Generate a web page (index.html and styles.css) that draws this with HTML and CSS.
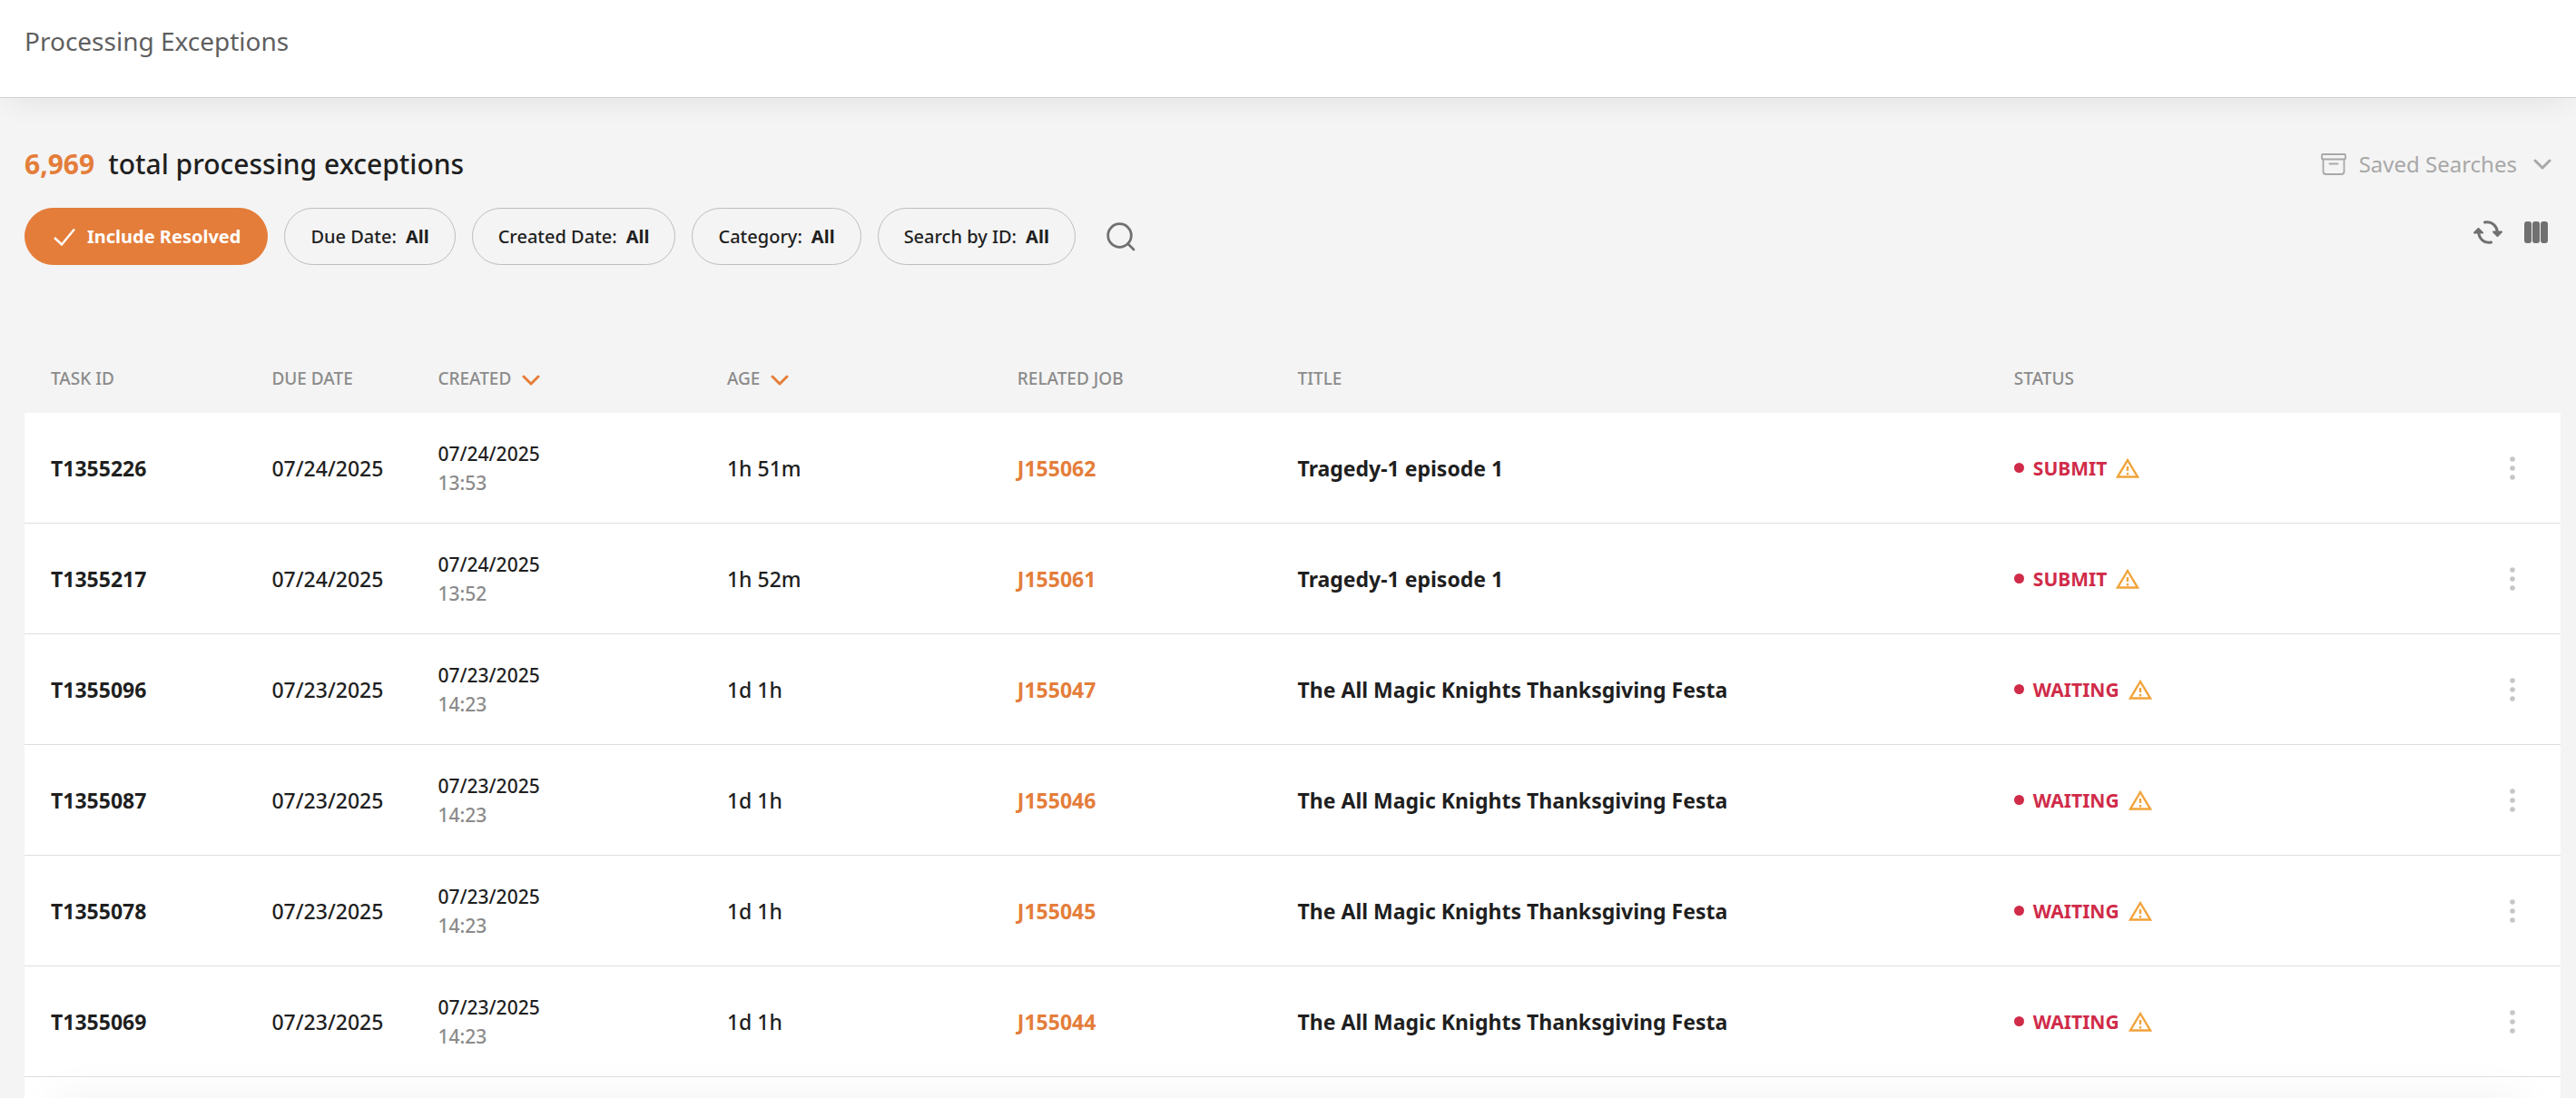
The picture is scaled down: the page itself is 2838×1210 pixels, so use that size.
FILE: index.html
```html
<!DOCTYPE html>
<html lang="en">
<head>
<meta charset="utf-8">
<meta name="viewport" content="width=device-width, initial-scale=1">
<title>Processing Exceptions</title>
<link rel="stylesheet" href="styles.css">
</head>
<body>
<svg class="sprite" aria-hidden="true">
  <symbol id="chevron" viewBox="0 0 20 12"><path d="M2 2l8 8 8-8" fill="none" stroke="currentColor" stroke-width="3" stroke-linecap="round" stroke-linejoin="round"/></symbol>
  <symbol id="warning" viewBox="0 0 26 24"><path d="M13 3L24 21.500H2z" fill="none" stroke="currentColor" stroke-width="2.400"/><path d="M13 10v5M13 17v2.500" stroke="currentColor" stroke-width="2.400"/></symbol>
  <symbol id="dots" viewBox="0 0 6 26"><circle cx="3" cy="3" r="2.800"/><circle cx="3" cy="13" r="2.800"/><circle cx="3" cy="23" r="2.800"/></symbol>
</svg>
<header class="topbar"><h1 class="topbar-title">Processing Exceptions</h1></header>
<main class="page">
  <div class="summary">
    <h2 class="total"><strong class="total-count">6,969</strong>total processing exceptions</h2>
    <button class="saved" type="button">
      <svg class="saved-icon" viewBox="0 0 28 24" aria-hidden="true"><g fill="none" stroke="currentColor" stroke-width="1.800" stroke-linecap="round"><rect x="1" y="1" width="26" height="5.500" rx="1"/><path d="M2.500 6.500V20a3 3 0 0 0 3 3h17a3 3 0 0 0 3-3V6.500M9.500 11.500h9"/></g></svg>
      <span>Saved Searches</span>
      <svg class="chevron" aria-hidden="true"><use href="#chevron"/></svg>
    </button>
  </div>
  <div class="toolbar">
    <div class="filters">
      <button class="chip chip-active" type="button" aria-pressed="true"><svg class="check" viewBox="0 0 24 20" aria-hidden="true"><path d="M1 11l8 7.500L23 1.500" fill="none" stroke="currentColor" stroke-width="2.400"/></svg>Include Resolved</button>
      <button class="chip" type="button">Due Date: <b class="chip-value">All</b></button>
      <button class="chip" type="button">Created Date: <b class="chip-value">All</b></button>
      <button class="chip" type="button">Category: <b class="chip-value">All</b></button>
      <button class="chip" type="button">Search by ID: <b class="chip-value">All</b></button>
      <button class="icon-button search" type="button" aria-label="Search"><svg class="search-icon" viewBox="0 0 32 32" aria-hidden="true"><g fill="none" stroke="currentColor" stroke-width="2.800" stroke-linecap="round"><circle cx="14.500" cy="14.500" r="12.800"/><path d="M24 24l6 6"/></g></svg></button>
    </div>
    <div class="actions">
      <button class="icon-button" type="button" aria-label="Refresh"><svg class="refresh-icon" viewBox="0 0 32 26" aria-hidden="true"><g fill="none" stroke="currentColor" stroke-width="3" stroke-linecap="round"><path d="M12.500 2C20 .2 26.500 6 26.500 15M19.500 24C12 25.800 5.500 20 5.500 11"/></g><path d="M22 12.500l4.500 4.500 4.500-4.500zM1 13.500L5.500 9l4.500 4.500z" fill="currentColor" stroke="currentColor" stroke-width="2" stroke-linejoin="round"/></svg></button>
      <button class="icon-button" type="button" aria-label="Columns"><svg class="columns-icon" viewBox="0 0 26 24" aria-hidden="true"><g fill="currentColor"><rect width="8" height="24" rx="3"/><rect x="9" width="8" height="24" rx="3"/><rect x="18" width="8" height="24" rx="3"/></g></svg></button>
    </div>
  </div>
  <div class="list">
    <table class="table">
      <colgroup><col class="c-id"><col class="c-due"><col class="c-created"><col class="c-age"><col class="c-job"><col class="c-title"><col class="c-status"><col class="c-menu"></colgroup>
      <thead>
        <tr><th scope="col">TASK ID</th><th scope="col">DUE DATE</th>
        <th scope="col"><button class="sort" type="button">CREATED<svg class="chevron" aria-hidden="true"><use href="#chevron"/></svg></button></th>
        <th scope="col"><button class="sort" type="button">AGE<svg class="chevron" aria-hidden="true"><use href="#chevron"/></svg></button></th>
        <th scope="col">RELATED JOB</th><th scope="col">TITLE</th><th scope="col">STATUS</th><td></td></tr>
      </thead>
      <tbody>
        <tr><td class="strong">T1355226</td><td>07/24/2025</td><td class="created">07/24/2025<span class="time">13:53</span></td><td>1h 51m</td><td><a class="job" href="#J155062">J155062</a></td><td class="strong">Tragedy-1 episode 1</td><td><div class="status">SUBMIT<svg class="warning" aria-hidden="true"><use href="#warning"/></svg></div></td><td><button class="menu" type="button" aria-label="Actions"><svg class="dots" aria-hidden="true"><use href="#dots"/></svg></button></td></tr>
        <tr><td class="strong">T1355217</td><td>07/24/2025</td><td class="created">07/24/2025<span class="time">13:52</span></td><td>1h 52m</td><td><a class="job" href="#J155061">J155061</a></td><td class="strong">Tragedy-1 episode 1</td><td><div class="status">SUBMIT<svg class="warning" aria-hidden="true"><use href="#warning"/></svg></div></td><td><button class="menu" type="button" aria-label="Actions"><svg class="dots" aria-hidden="true"><use href="#dots"/></svg></button></td></tr>
        <tr><td class="strong">T1355096</td><td>07/23/2025</td><td class="created">07/23/2025<span class="time">14:23</span></td><td>1d 1h</td><td><a class="job" href="#J155047">J155047</a></td><td class="strong">The All Magic Knights Thanksgiving Festa</td><td><div class="status">WAITING<svg class="warning" aria-hidden="true"><use href="#warning"/></svg></div></td><td><button class="menu" type="button" aria-label="Actions"><svg class="dots" aria-hidden="true"><use href="#dots"/></svg></button></td></tr>
        <tr><td class="strong">T1355087</td><td>07/23/2025</td><td class="created">07/23/2025<span class="time">14:23</span></td><td>1d 1h</td><td><a class="job" href="#J155046">J155046</a></td><td class="strong">The All Magic Knights Thanksgiving Festa</td><td><div class="status">WAITING<svg class="warning" aria-hidden="true"><use href="#warning"/></svg></div></td><td><button class="menu" type="button" aria-label="Actions"><svg class="dots" aria-hidden="true"><use href="#dots"/></svg></button></td></tr>
        <tr><td class="strong">T1355078</td><td>07/23/2025</td><td class="created">07/23/2025<span class="time">14:23</span></td><td>1d 1h</td><td><a class="job" href="#J155045">J155045</a></td><td class="strong">The All Magic Knights Thanksgiving Festa</td><td><div class="status">WAITING<svg class="warning" aria-hidden="true"><use href="#warning"/></svg></div></td><td><button class="menu" type="button" aria-label="Actions"><svg class="dots" aria-hidden="true"><use href="#dots"/></svg></button></td></tr>
        <tr><td class="strong">T1355069</td><td>07/23/2025</td><td class="created">07/23/2025<span class="time">14:23</span></td><td>1d 1h</td><td><a class="job" href="#J155044">J155044</a></td><td class="strong">The All Magic Knights Thanksgiving Festa</td><td><div class="status">WAITING<svg class="warning" aria-hidden="true"><use href="#warning"/></svg></div></td><td><button class="menu" type="button" aria-label="Actions"><svg class="dots" aria-hidden="true"><use href="#dots"/></svg></button></td></tr>
      </tbody>
    </table>
    <div class="list-rest"></div>
  </div>
</main>
<div class="bottom-shade"></div>
</body>
</html>
```
FILE: styles.css
```css
:root {
  --orange: #e47d3a;
  --red: #d02b49;
  --ink: #1f1f1f;
  --muted: #8b8b8b;
}

* { box-sizing: border-box; }

body {
  margin: 0;
  height: 100vh;
  display: flex;
  flex-direction: column;
  overflow: hidden;
  background: #f4f4f4;
  color: var(--ink);
  font: 500 23px/32px "Noto Sans", sans-serif;
}

button {
  margin: 0;
  padding: 0;
  border: 0;
  background: none;
  color: inherit;
  font: inherit;
  cursor: pointer;
}

svg { display: block; flex: none; }
.sprite { position: absolute; width: 0; height: 0; }

.topbar {
  flex: none;
  padding: 27px 27px 44px;
  border-bottom: 1px solid #d2d2d2;
  background: #fff;
  box-shadow: 0 15px 30px -10px rgba(0, 0, 0, .07);
}
.topbar-title {
  margin: 0;
  color: #5f5f5f;
  font-size: 28px;
  font-weight: 400;
  line-height: 36px;
}

.page {
  flex: 1;
  display: flex;
  flex-direction: column;
  min-height: 0;
  padding: 53px 17px 0 27px;
}
.summary, .toolbar {
  display: flex;
  align-items: center;
  justify-content: space-between;
}
.summary { padding-right: 10px; }
.total {
  margin: 0;
  font-size: 30px;
  font-weight: 500;
  line-height: 40px;
}
.total-count {
  margin-right: 15px;
  color: var(--orange);
  font-weight: 700;
}
.saved {
  display: flex;
  align-items: center;
  gap: 14px;
  color: #a8a8a8;
  font-size: 24px;
  font-weight: 400;
}
.saved-icon { width: 28px; height: 24px; }
.chevron { width: 20px; height: 12px; }
.saved .chevron { margin-left: 4px; }

.toolbar { margin-top: 28px; padding-right: 14px; }
.filters, .actions { display: flex; align-items: center; }
.filters { gap: 18px; }
.chip {
  display: flex;
  align-items: center;
  height: 63px;
  padding: 0 28px;
  border: 1px solid #bdbdbd;
  border-radius: 32px;
  font-size: 20px;
}
.chip-value { margin-left: 10px; font-weight: 700; }
.chip-active {
  padding: 0 29px 0 31px;
  border-color: var(--orange);
  background: var(--orange);
  color: #fff;
  font-weight: 700;
}
.check { width: 24px; height: 20px; margin-right: 13px; }
.icon-button { color: #707070; }
.search { margin-left: 16px; }
.search-icon { width: 32px; height: 32px; }
.actions { gap: 24px; padding-bottom: 9px; }
.refresh-icon { width: 32px; height: 26px; }
.columns-icon { width: 26px; height: 24px; }

.list {
  flex: 1;
  display: flex;
  flex-direction: column;
  margin-top: 87px;
}
.list-rest { flex: 1; background: #fff; }
.table {
  width: 100%;
  border-spacing: 0;
  table-layout: fixed;
}
.c-id { width: 9.75%; }
.c-due { width: 6.55%; }
.c-created { width: 11.4%; }
.c-age { width: 11.45%; }
.c-job { width: 11.05%; }
.c-title { width: 28.25%; }
.c-status { width: 16.55%; }
.c-menu { width: 5%; }

th, td { padding: 0; text-align: left; white-space: nowrap; }
th:first-child, td:first-child { padding-left: 29px; }
thead th {
  height: 76px;
  color: var(--muted);
  font-size: 19px;
  font-weight: 500;
}
.sort { display: flex; align-items: center; gap: 12px; }
.sort .chevron { margin-top: 4px; color: var(--orange); }

tbody td {
  height: 122px;
  border-bottom: 1px solid #dedede;
  background: #fff;
}
tbody .strong { font-weight: 700; }
tbody .created { font-size: 21px; }
.time { display: block; color: var(--muted); }
.job { color: var(--orange); font-weight: 700; text-decoration: none; }
.status {
  display: flex;
  align-items: center;
  gap: 10px;
  color: var(--red);
  font-size: 21px;
  font-weight: 700;
}
.status::before {
  content: "";
  width: 11px;
  height: 11px;
  border-radius: 50%;
  background: currentColor;
}
.warning { width: 26px; height: 24px; color: #f1a33a; }
.menu { display: block; margin: 0 50px 0 auto; color: #c6c6c6; }
.dots { width: 6px; height: 26px; fill: currentColor; }

.bottom-shade {
  position: fixed;
  inset: 100% 60px auto;
  height: 60px;
  box-shadow: 0 0 50px rgba(0, 0, 0, .06);
  pointer-events: none;
}
```
